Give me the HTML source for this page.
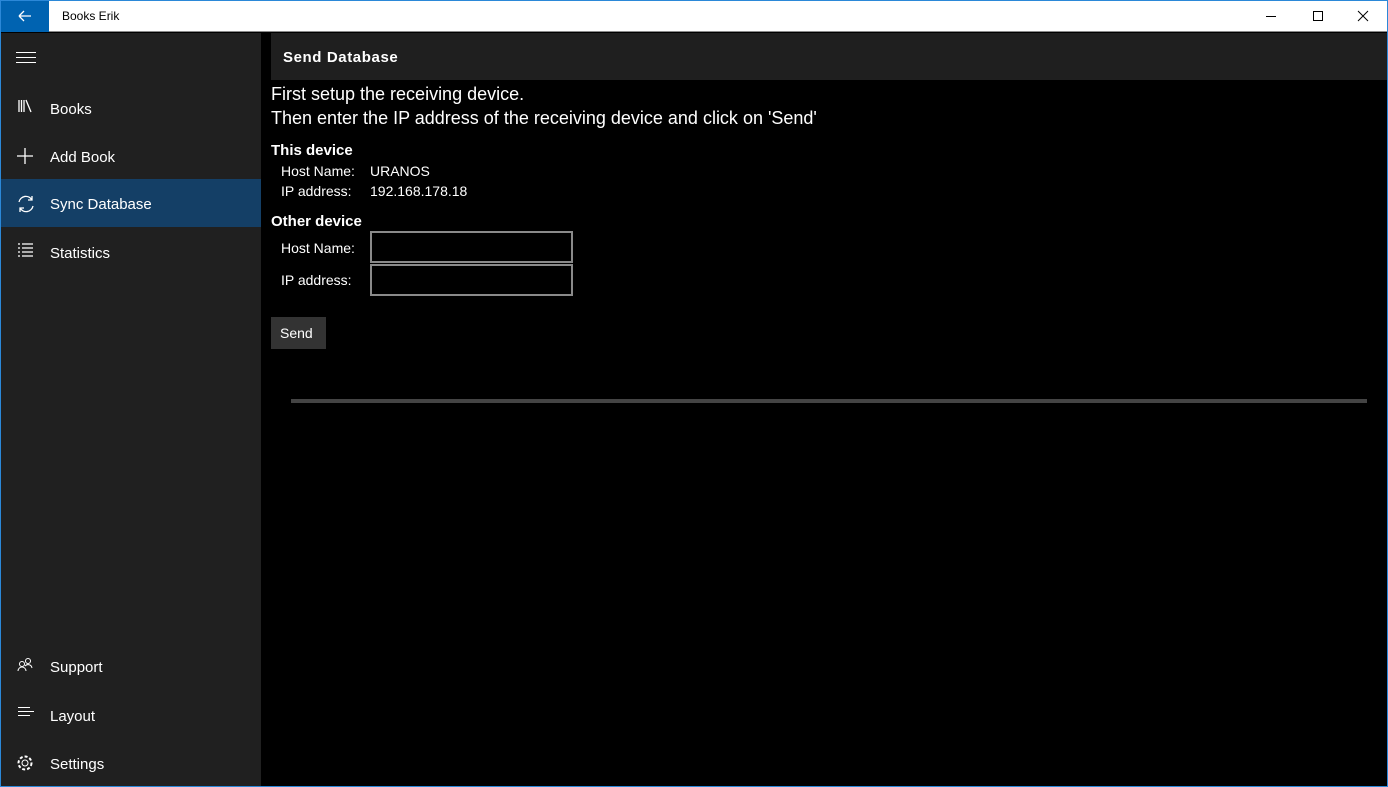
<!DOCTYPE html>
<html><head><style>
*{margin:0;padding:0;box-sizing:border-box}
body{width:1388px;height:787px;background:#000;font-family:"Segoe UI","Liberation Sans",sans-serif;color:#fff;position:relative;overflow:hidden}
.frame{position:absolute;inset:0;border:1px solid #2b88d8;pointer-events:none;z-index:9}
.title{position:absolute;left:0;top:0;width:1388px;height:32px;background:#fff;border-bottom:1px solid #8a8a8a}
.back{position:absolute;left:0;top:0;width:49px;height:32px;background:#0063b1}
.ttxt{position:absolute;left:62px;top:9px;font-size:12px;color:#000}
.side{position:absolute;left:1px;top:33px;width:260px;height:753px;background:#202020}
.item{position:absolute;left:0;width:260px;height:48px;font-size:15px;color:#fff}
.item span{position:absolute;left:49px;top:17px}
.item svg{position:absolute;left:15px;top:15px}
.sel{background:#143f66}
.hdr{position:absolute;left:271px;top:33px;width:1116px;height:47px;background:#1f1f1f}
.hdr b{position:absolute;left:12px;top:16px;font-size:15px;letter-spacing:.6px}
.t{position:absolute;font-size:14px;white-space:nowrap}
.box{position:absolute;left:370px;width:203px;height:32px;border:2px solid #8a8a8a}
</style></head><body>
<div class="title">
<div class="back"><svg width="49" height="32"><path d="M19 16h12M19 16l5-5M19 16l5 5" stroke="#fff" stroke-width="1.3" fill="none"/></svg></div>
<div class="ttxt">Books Erik</div>
<svg style="position:absolute;left:1260px;top:0" width="128" height="32"><path d="M6 16.5h10" stroke="#000"/><rect x="53.5" y="11.5" width="9" height="9" stroke="#000" fill="none"/><path d="M98 11l10 10M108 11l-10 10" stroke="#000"/></svg>
</div>
<div class="side">
<svg style="position:absolute;left:15px;top:19px" width="22" height="12"><path d="M0 .5h20M0 5.5h20M0 10.5h20" stroke="#fff"/></svg>
<div class="item" style="top:51px"><svg width="20" height="20"><path d="M3 1v12M5.5 1v12M8 1v12M10 1l5 12" stroke="#fff" stroke-width="1.3" fill="none"/></svg><span>Books</span></div>
<div class="item" style="top:99px"><svg width="20" height="20"><path d="M9 1v16M1 9h16" stroke="#fff" stroke-width="1.3"/></svg><span>Add Book</span></div>
<div class="item sel" style="top:146px"><svg width="22" height="20"><path d="M3 8a7 7 0 0 1 13-2M17 12a7 7 0 0 1-13 2M16 2v4h-4M4 18v-4h4" stroke="#fff" stroke-width="1.3" fill="none"/></svg><span>Sync Database</span></div>
<div class="item" style="top:195px"><svg width="20" height="20"><path d="M2 1h2M6 1h11M2 5h2M6 5h11M2 9h2M6 9h11M2 13h2M6 13h11" stroke="#fff" stroke-width="1.2"/></svg><span>Statistics</span></div>
<div class="item" style="top:609px"><svg width="20" height="20"><circle cx="6" cy="7" r="2.5" stroke="#fff" fill="none"/><circle cx="12" cy="4" r="2.5" stroke="#fff" fill="none"/><path d="M2 14a4 4 0 0 1 8 0M9 9a4 4 0 0 1 7 2" stroke="#fff" fill="none"/></svg><span>Support</span></div>
<div class="item" style="top:658px"><svg width="20" height="20"><path d="M2 1.5h12M2 5.5h16M2 9.5h12" stroke="#fff"/></svg><span>Layout</span></div>
<div class="item" style="top:706px"><svg width="20" height="20"><circle cx="9" cy="9" r="3" stroke="#fff" fill="none"/><circle cx="9" cy="9" r="6.5" stroke="#fff" stroke-dasharray="3 2" stroke-width="2" fill="none"/></svg><span>Settings</span></div>
</div>
<div class="hdr"><b>Send Database</b></div>
<div class="t" style="left:271px;top:84px;font-size:18px">First setup the receiving device.</div>
<div class="t" style="left:271px;top:108px;font-size:18px">Then enter the IP address of the receiving device and click on 'Send'</div>
<div class="t" style="left:271px;top:142px;font-weight:bold;font-size:15px">This device</div>
<div class="t" style="left:281px;top:163px">Host Name:</div><div class="t" style="left:370px;top:163px">URANOS</div>
<div class="t" style="left:281px;top:183px">IP address:</div><div class="t" style="left:370px;top:183px">192.168.178.18</div>
<div class="t" style="left:271px;top:213px;font-weight:bold;font-size:15px">Other device</div>
<div class="t" style="left:281px;top:240px">Host Name:</div><div class="box" style="top:231px"></div>
<div class="t" style="left:281px;top:272px">IP address:</div><div class="box" style="top:264px"></div>
<div style="position:absolute;left:271px;top:317px;width:55px;height:32px;background:#333"><span class="t" style="left:9px;top:8px">Send</span></div>
<div style="position:absolute;left:291px;top:399px;width:1076px;height:4px;background:#444"></div>
<div class="frame"></div>
</body></html>
